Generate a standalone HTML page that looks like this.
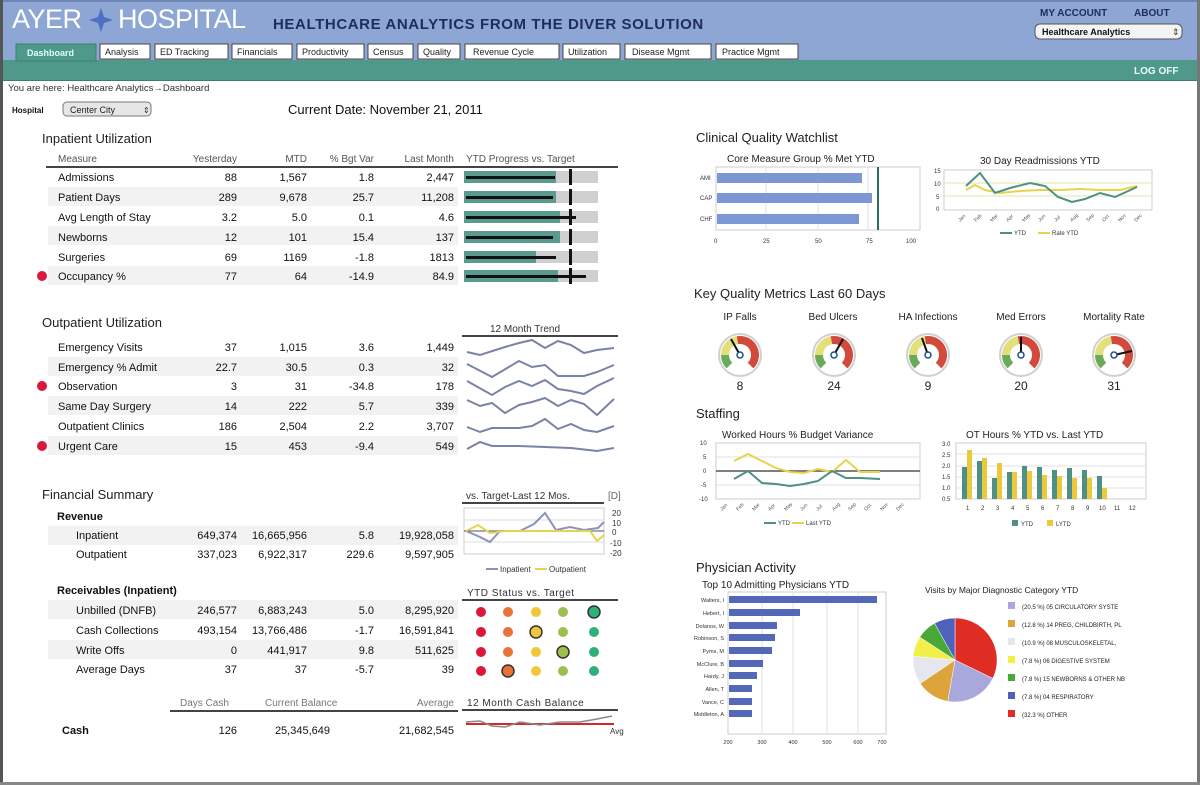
<!DOCTYPE html>
<html><head><meta charset="utf-8"><style>
html,body{margin:0;padding:0;background:#fff;}
svg{display:block;font-family:"Liberation Sans",sans-serif;}
</style></head><body>
<svg width="1200" height="785" viewBox="0 0 1200 785" xmlns="http://www.w3.org/2000/svg">
<rect x="0" y="0" width="1200" height="785" fill="#fff"/>
<rect x="0" y="0" width="1200" height="62" fill="#8ea6d3"/>
<rect x="0" y="0" width="1200" height="2" fill="#6f86b6"/>
<rect x="0" y="60" width="1200" height="21" fill="#4f998b"/>
<rect x="0" y="80" width="1200" height="1" fill="#3d7d70"/>
<rect x="0" y="0" width="3" height="785" fill="#555"/>
<rect x="1197" y="0" width="3" height="785" fill="#777"/>
<rect x="0" y="782" width="1200" height="3" fill="#888"/>
<text x="12" y="28" font-size="27" fill="#fff" letter-spacing="-0.5">AYER</text>
<path d="M101 8 L104 17 L113 20 L104 23 L101 32 L98 23 L89 20 L98 17Z" fill="#4d6fc4"/>
<text x="118" y="28" font-size="27" fill="#fff" letter-spacing="-0.5">HOSPITAL</text>
<text x="273" y="29" font-size="15" fill="#1e2c5e" font-weight="bold" letter-spacing="0.6">HEALTHCARE ANALYTICS FROM THE DIVER SOLUTION</text>
<text x="1040" y="16" font-size="10" fill="#1e2c5e" font-weight="bold">MY ACCOUNT</text>
<text x="1134" y="16" font-size="10" fill="#1e2c5e" font-weight="bold">ABOUT</text>
<rect x="1035" y="24" width="147" height="15" rx="5" fill="#f4f4f4" stroke="#555"/>
<text x="1042" y="35" font-size="9" font-weight="bold" fill="#111">Healthcare Analytics</text>
<text x="1172" y="35" font-size="9" fill="#333">⇕</text>
<text x="1134" y="74" font-size="10" fill="#e8fff8" font-weight="bold">LOG OFF</text>
<rect x="16" y="44" width="80" height="17" fill="#4f998b" stroke="#3d7d70"/>
<text x="27" y="56" font-size="9" font-weight="bold" fill="#dff">Dashboard</text>
<g font-size="9" fill="#222">
<rect x="100" y="44" width="50" height="15" fill="#fff" stroke="#444"/><text x="105" y="55">Analysis</text>
<rect x="155" y="44" width="73" height="15" fill="#fff" stroke="#444"/><text x="160" y="55">ED Tracking</text>
<rect x="232" y="44" width="60" height="15" fill="#fff" stroke="#444"/><text x="237" y="55">Financials</text>
<rect x="297" y="44" width="67" height="15" fill="#fff" stroke="#444"/><text x="302" y="55">Productivity</text>
<rect x="368" y="44" width="45" height="15" fill="#fff" stroke="#444"/><text x="373" y="55">Census</text>
<rect x="418" y="44" width="42" height="15" fill="#fff" stroke="#444"/><text x="423" y="55">Quality</text>
<rect x="465" y="44" width="94" height="15" fill="#fff" stroke="#444"/><text x="473" y="55">Revenue Cycle</text>
<rect x="563" y="44" width="57" height="15" fill="#fff" stroke="#444"/><text x="568" y="55">Utilization</text>
<rect x="625" y="44" width="86" height="15" fill="#fff" stroke="#444"/><text x="632" y="55">Disease Mgmt</text>
<rect x="716" y="44" width="82" height="15" fill="#fff" stroke="#444"/><text x="722" y="55">Practice Mgmt</text>
</g>
<text x="8" y="91" font-size="9.5" fill="#333">You are here: Healthcare Analytics→Dashboard</text>
<text x="12" y="113" font-size="8" font-weight="bold" fill="#111">Hospital</text>
<rect x="63" y="102" width="88" height="14" rx="4" fill="#e6e6e6" stroke="#777"/>
<text x="70" y="113" font-size="9" fill="#222">Center City</text>
<text x="143" y="113" font-size="8" fill="#333">⇕</text>
<text x="288" y="114" font-size="13" fill="#111">Current Date: November 21, 2011</text>

<text x="42" y="143" font-size="13" fill="#222">Inpatient Utilization</text>
<g font-size="10" fill="#555">
<text x="58" y="162">Measure</text>
<text x="237" y="162" text-anchor="end">Yesterday</text>
<text x="307" y="162" text-anchor="end">MTD</text>
<text x="374" y="162" text-anchor="end">% Bgt Var</text>
<text x="454" y="162" text-anchor="end">Last Month</text>
<text x="466" y="162">YTD Progress vs. Target</text>
</g>
<rect x="46" y="166" width="572" height="2" fill="#444"/>
<g fill="#f2f2f2"><rect x="48" y="187" width="410" height="19"/><rect x="48" y="226" width="410" height="19"/><rect x="48" y="266" width="410" height="19"/></g>
<g font-size="11" fill="#111">
<text x="58" y="181">Admissions</text><text x="237" y="181" text-anchor="end">88</text><text x="307" y="181" text-anchor="end">1,567</text><text x="374" y="181" text-anchor="end">1.8</text><text x="454" y="181" text-anchor="end">2,447</text>
<text x="58" y="201">Patient Days</text><text x="237" y="201" text-anchor="end">289</text><text x="307" y="201" text-anchor="end">9,678</text><text x="374" y="201" text-anchor="end">25.7</text><text x="454" y="201" text-anchor="end">11,208</text>
<text x="58" y="221">Avg Length of Stay</text><text x="237" y="221" text-anchor="end">3.2</text><text x="307" y="221" text-anchor="end">5.0</text><text x="374" y="221" text-anchor="end">0.1</text><text x="454" y="221" text-anchor="end">4.6</text>
<text x="58" y="241">Newborns</text><text x="237" y="241" text-anchor="end">12</text><text x="307" y="241" text-anchor="end">101</text><text x="374" y="241" text-anchor="end">15.4</text><text x="454" y="241" text-anchor="end">137</text>
<text x="58" y="261">Surgeries</text><text x="237" y="261" text-anchor="end">69</text><text x="307" y="261" text-anchor="end">1169</text><text x="374" y="261" text-anchor="end">-1.8</text><text x="454" y="261" text-anchor="end">1813</text>
<text x="58" y="280">Occupancy %</text><text x="237" y="280" text-anchor="end">77</text><text x="307" y="280" text-anchor="end">64</text><text x="374" y="280" text-anchor="end">-14.9</text><text x="454" y="280" text-anchor="end">84.9</text>
</g>
<circle cx="42" cy="276" r="5" fill="#d9183a"/>
<g>
<rect x="464" y="171" width="134" height="12" fill="#cfcfcf"/><rect x="464" y="171" width="92" height="12" fill="#5b9a8e"/><rect x="466" y="176" width="89" height="3" fill="#111"/><rect x="569" y="169" width="3" height="16" fill="#111"/>
<rect x="464" y="191" width="134" height="12" fill="#cfcfcf"/><rect x="464" y="191" width="92" height="12" fill="#5b9a8e"/><rect x="466" y="196" width="87" height="3" fill="#111"/><rect x="569" y="189" width="3" height="16" fill="#111"/>
<rect x="464" y="211" width="134" height="12" fill="#cfcfcf"/><rect x="464" y="211" width="96" height="12" fill="#5b9a8e"/><rect x="466" y="216" width="110" height="3" fill="#111"/><rect x="569" y="209" width="3" height="16" fill="#111"/>
<rect x="464" y="231" width="134" height="12" fill="#cfcfcf"/><rect x="464" y="231" width="96" height="12" fill="#5b9a8e"/><rect x="466" y="236" width="87" height="3" fill="#111"/><rect x="569" y="229" width="3" height="16" fill="#111"/>
<rect x="464" y="251" width="134" height="12" fill="#cfcfcf"/><rect x="464" y="251" width="72" height="12" fill="#5b9a8e"/><rect x="466" y="256" width="90" height="3" fill="#111"/><rect x="569" y="249" width="3" height="16" fill="#111"/>
<rect x="464" y="270" width="134" height="12" fill="#cfcfcf"/><rect x="464" y="270" width="94" height="12" fill="#5b9a8e"/><rect x="466" y="275" width="120" height="3" fill="#111"/><rect x="569" y="268" width="3" height="16" fill="#111"/>
</g>

<text x="42" y="327" font-size="13" fill="#222">Outpatient Utilization</text>
<text x="490" y="332" font-size="10" fill="#333">12 Month Trend</text>
<rect x="462" y="335" width="156" height="2" fill="#444"/>
<g fill="#f2f2f2"><rect x="48" y="357" width="410" height="19"/><rect x="48" y="396" width="410" height="19"/><rect x="48" y="436" width="410" height="19"/></g>
<g font-size="11" fill="#111">
<text x="58" y="351">Emergency Visits</text><text x="237" y="351" text-anchor="end">37</text><text x="307" y="351" text-anchor="end">1,015</text><text x="374" y="351" text-anchor="end">3.6</text><text x="454" y="351" text-anchor="end">1,449</text>
<text x="58" y="371">Emergency % Admit</text><text x="237" y="371" text-anchor="end">22.7</text><text x="307" y="371" text-anchor="end">30.5</text><text x="374" y="371" text-anchor="end">0.3</text><text x="454" y="371" text-anchor="end">32</text>
<text x="58" y="390">Observation</text><text x="237" y="390" text-anchor="end">3</text><text x="307" y="390" text-anchor="end">31</text><text x="374" y="390" text-anchor="end">-34.8</text><text x="454" y="390" text-anchor="end">178</text>
<text x="58" y="410">Same Day Surgery</text><text x="237" y="410" text-anchor="end">14</text><text x="307" y="410" text-anchor="end">222</text><text x="374" y="410" text-anchor="end">5.7</text><text x="454" y="410" text-anchor="end">339</text>
<text x="58" y="430">Outpatient Clinics</text><text x="237" y="430" text-anchor="end">186</text><text x="307" y="430" text-anchor="end">2,504</text><text x="374" y="430" text-anchor="end">2.2</text><text x="454" y="430" text-anchor="end">3,707</text>
<text x="58" y="450">Urgent Care</text><text x="237" y="450" text-anchor="end">15</text><text x="307" y="450" text-anchor="end">453</text><text x="374" y="450" text-anchor="end">-9.4</text><text x="454" y="450" text-anchor="end">549</text>
</g>
<circle cx="42" cy="386" r="5" fill="#d9183a"/><circle cx="42" cy="446" r="5" fill="#d9183a"/>
<g fill="none" stroke="#7a82a8" stroke-width="2">
<polyline points="467,352 480,355 505,347 519,343 532,340 545,348 558,341 571,345 584,353 597,350 614,348"/>
<polyline points="467,364 492,377 519,361 532,367 545,365 558,376 584,376 597,372 614,365"/>
<polyline points="467,381 492,395 505,387 519,381 532,386 545,380 558,389 571,391 584,394 597,386 614,378"/>
<polyline points="467,400 480,406 492,403 505,413 519,405 532,402 545,398 558,406 571,400 584,404 597,415 614,399"/>
<polyline points="467,427 480,432 492,428 519,428 532,426 545,419 558,429 571,424 584,430 597,432 614,426"/>
<polyline points="467,449 480,442 492,446 519,446 545,447 571,448 597,451 614,448"/>
</g>

<text x="42" y="499" font-size="13" fill="#222">Financial Summary</text>
<text x="57" y="520" font-size="11" font-weight="bold" fill="#111">Revenue</text>
<text x="57" y="594" font-size="11" font-weight="bold" fill="#111">Receivables (Inpatient)</text>
<g fill="#f2f2f2"><rect x="48" y="526" width="410" height="19"/><rect x="48" y="600" width="410" height="19"/><rect x="48" y="640" width="410" height="19"/></g>
<g font-size="11" fill="#111">
<text x="76" y="539">Inpatient</text><text x="237" y="539" text-anchor="end">649,374</text><text x="307" y="539" text-anchor="end">16,665,956</text><text x="374" y="539" text-anchor="end">5.8</text><text x="454" y="539" text-anchor="end">19,928,058</text>
<text x="76" y="558">Outpatient</text><text x="237" y="558" text-anchor="end">337,023</text><text x="307" y="558" text-anchor="end">6,922,317</text><text x="374" y="558" text-anchor="end">229.6</text><text x="454" y="558" text-anchor="end">9,597,905</text>
<text x="76" y="614">Unbilled (DNFB)</text><text x="237" y="614" text-anchor="end">246,577</text><text x="307" y="614" text-anchor="end">6,883,243</text><text x="374" y="614" text-anchor="end">5.0</text><text x="454" y="614" text-anchor="end">8,295,920</text>
<text x="76" y="634">Cash Collections</text><text x="237" y="634" text-anchor="end">493,154</text><text x="307" y="634" text-anchor="end">13,766,486</text><text x="374" y="634" text-anchor="end">-1.7</text><text x="454" y="634" text-anchor="end">16,591,841</text>
<text x="76" y="654">Write Offs</text><text x="237" y="654" text-anchor="end">0</text><text x="307" y="654" text-anchor="end">441,917</text><text x="374" y="654" text-anchor="end">9.8</text><text x="454" y="654" text-anchor="end">511,625</text>
<text x="76" y="673">Average Days</text><text x="237" y="673" text-anchor="end">37</text><text x="307" y="673" text-anchor="end">37</text><text x="374" y="673" text-anchor="end">-5.7</text><text x="454" y="673" text-anchor="end">39</text>
<text x="62" y="734" font-weight="bold">Cash</text><text x="237" y="734" text-anchor="end">126</text><text x="330" y="734" text-anchor="end">25,345,649</text><text x="454" y="734" text-anchor="end">21,682,545</text>
</g>
<g font-size="10" fill="#777">
<text x="180" y="706">Days Cash</text><text x="265" y="706">Current Balance</text><text x="454" y="706" text-anchor="end">Average</text>
</g>
<rect x="170" y="710" width="288" height="2" fill="#444"/>
<text x="466" y="499" font-size="10" fill="#333">vs.  Target-Last 12 Mos.</text>
<text x="608" y="499" font-size="10" fill="#666">[D]</text>
<rect x="462" y="502" width="142" height="2" fill="#444"/>
<rect x="464" y="508" width="140" height="46" fill="#fff" stroke="#ccc"/>
<g stroke="#ddd"><line x1="464" y1="520" x2="604" y2="520"/><line x1="464" y1="542" x2="604" y2="542"/></g>
<line x1="464" y1="531" x2="604" y2="531" stroke="#555"/>
<polyline fill="none" stroke="#8a92c0" stroke-width="2" points="466,531 480,537 490,542 500,531 520,531 534,524 545,513 556,530 570,527 584,530 598,528 604,522"/>
<polyline fill="none" stroke="#e8d44c" stroke-width="2" points="466,531 478,525 490,533 505,531 530,531 560,531 590,531 597,541 604,535"/>
<g font-size="8" fill="#333"><text x="612" y="516">20</text><text x="612" y="526">10</text><text x="612" y="535">0</text><text x="610" y="546">-10</text><text x="610" y="556">-20</text></g>
<g font-size="8" fill="#333"><line x1="486" y1="569" x2="498" y2="569" stroke="#8a92c0" stroke-width="2"/><text x="500" y="572">Inpatient</text><line x1="535" y1="569" x2="547" y2="569" stroke="#e8d44c" stroke-width="2"/><text x="549" y="572">Outpatient</text></g>
<text x="467" y="596" font-size="10" fill="#333" letter-spacing="0.5">YTD Status vs. Target</text>
<rect x="462" y="599" width="156" height="2" fill="#444"/>
<g>
<g fill="#d9183a"><circle cx="481" cy="612" r="5"/><circle cx="481" cy="632" r="5"/><circle cx="481" cy="652" r="5"/><circle cx="481" cy="671" r="5"/></g>
<g fill="#e8733a"><circle cx="508" cy="612" r="5"/><circle cx="508" cy="632" r="5"/><circle cx="508" cy="652" r="5"/><circle cx="508" cy="671" r="6" stroke="#333" stroke-width="1.5"/></g>
<g fill="#f0c63a"><circle cx="536" cy="612" r="5"/><circle cx="536" cy="632" r="6" stroke="#333" stroke-width="1.5"/><circle cx="536" cy="652" r="5"/><circle cx="536" cy="671" r="5"/></g>
<g fill="#9cbf4e"><circle cx="563" cy="612" r="5"/><circle cx="563" cy="632" r="5"/><circle cx="563" cy="652" r="6" stroke="#333" stroke-width="1.5"/><circle cx="563" cy="671" r="5"/></g>
<g fill="#2fb07a"><circle cx="594" cy="612" r="6" stroke="#333" stroke-width="1.5"/><circle cx="594" cy="632" r="5"/><circle cx="594" cy="652" r="5"/><circle cx="594" cy="671" r="5"/></g>
</g>
<text x="467" y="706" font-size="10" fill="#333" letter-spacing="0.5">12 Month Cash Balance</text>
<rect x="462" y="709" width="156" height="2" fill="#444"/>
<line x1="466" y1="724" x2="614" y2="724" stroke="#d62828" stroke-width="2"/>
<polyline fill="none" stroke="#888" stroke-width="1.5" points="466,722 480,721 492,726 505,727 520,722 540,725 560,722 580,722 597,719 612,716"/>
<text x="610" y="734" font-size="8" fill="#333">Avg</text>

<text x="696" y="142" font-size="13" fill="#222">Clinical Quality Watchlist</text>
<text x="727" y="162" font-size="10" fill="#222">Core Measure Group % Met YTD</text>
<rect x="716" y="167" width="204" height="63" fill="#fff" stroke="#ccc"/>
<g stroke="#e2e2e2"><line x1="766" y1="167" x2="766" y2="230"/><line x1="818" y1="167" x2="818" y2="230"/><line x1="868" y1="167" x2="868" y2="230"/></g>
<g fill="#7d97d4"><rect x="717" y="173" width="145" height="10"/><rect x="717" y="193" width="155" height="10"/><rect x="717" y="214" width="142" height="10"/></g>
<rect x="877" y="167" width="2" height="63" fill="#2d6e60"/>
<g font-size="6" fill="#333"><text x="700" y="180">AMI</text><text x="700" y="200">CAP</text><text x="700" y="221">CHF</text>
<text x="714" y="243">0</text><text x="763" y="243">25</text><text x="815" y="243">50</text><text x="866" y="243">75</text><text x="906" y="243">100</text></g>
<text x="980" y="164" font-size="10" fill="#222">30 Day Readmissions YTD</text>
<rect x="944" y="170" width="208" height="40" fill="#fff" stroke="#ccc"/>
<g stroke="#e4e4a0"><line x1="944" y1="183" x2="1152" y2="183"/><line x1="944" y1="196" x2="1152" y2="196"/></g>
<polyline fill="none" stroke="#e8d44c" stroke-width="2" points="966,190 975,185 985,190 1000,193 1020,191 1040,190 1060,190 1080,189 1100,190 1120,190 1137,186"/>
<polyline fill="none" stroke="#4e8f86" stroke-width="2" points="966,186 980,173 995,193 1010,188 1030,183 1045,186 1058,197 1072,202 1085,199 1100,193 1115,197 1137,187"/>
<g font-size="6" fill="#333"><text x="934" y="173">15</text><text x="934" y="186">10</text><text x="936" y="199">5</text><text x="936" y="211">0</text></g>
<g font-size="5" fill="#555">
<text transform="translate(960,222) rotate(-45)">Jan</text><text transform="translate(976,222) rotate(-45)">Feb</text><text transform="translate(992,222) rotate(-45)">Mar</text><text transform="translate(1008,222) rotate(-45)">Apr</text><text transform="translate(1024,222) rotate(-45)">May</text><text transform="translate(1040,222) rotate(-45)">Jun</text><text transform="translate(1056,222) rotate(-45)">Jul</text><text transform="translate(1072,222) rotate(-45)">Aug</text><text transform="translate(1088,222) rotate(-45)">Sep</text><text transform="translate(1104,222) rotate(-45)">Oct</text><text transform="translate(1120,222) rotate(-45)">Nov</text><text transform="translate(1136,222) rotate(-45)">Dec</text>
</g>
<g font-size="6" fill="#333"><line x1="1000" y1="233" x2="1012" y2="233" stroke="#4e8f86" stroke-width="2"/><text x="1014" y="235">YTD</text><line x1="1038" y1="233" x2="1050" y2="233" stroke="#e8d44c" stroke-width="2"/><text x="1052" y="235">Rate YTD</text></g>

<text x="694" y="298" font-size="13" fill="#222">Key Quality Metrics Last 60 Days</text>
<g font-size="10" fill="#222" text-anchor="middle">
<text x="740" y="320">IP Falls</text><text x="833" y="320">Bed Ulcers</text><text x="928" y="320">HA Infections</text><text x="1021" y="320">Med Errors</text><text x="1114" y="320">Mortality Rate</text>
<text x="740" y="390" font-size="12">8</text><text x="834" y="390" font-size="12">24</text><text x="928" y="390" font-size="12">9</text><text x="1021" y="390" font-size="12">20</text><text x="1114" y="390" font-size="12">31</text>
</g>
<g>
<g transform="translate(740,355)">
<circle r="21" fill="#fff" stroke="#d0d0d0" stroke-width="2"/>
<g fill="none" stroke-width="8"><path d="M-10.6 10.6 A15 15 0 0 1 -15 0" stroke="#6aaa5a"/><path d="M-15 0 A15 15 0 0 1 -2.6 -14.8" stroke="#e3e07a"/><path d="M-2.6 -14.8 A15 15 0 0 1 10.6 10.6" stroke="#d24a3c"/></g>
<line x1="0" y1="0" x2="-9" y2="-16" stroke="#111" stroke-width="2"/><circle r="3" fill="#fff" stroke="#1d4f8a" stroke-width="1.5"/>
</g>
<g transform="translate(834,355)">
<circle r="21" fill="#fff" stroke="#d0d0d0" stroke-width="2"/>
<g fill="none" stroke-width="8"><path d="M-10.6 10.6 A15 15 0 0 1 -15 0" stroke="#6aaa5a"/><path d="M-15 0 A15 15 0 0 1 -2.6 -14.8" stroke="#e3e07a"/><path d="M-2.6 -14.8 A15 15 0 0 1 10.6 10.6" stroke="#d24a3c"/></g>
<line x1="0" y1="0" x2="9" y2="-16" stroke="#111" stroke-width="2"/><circle r="3" fill="#fff" stroke="#1d4f8a" stroke-width="1.5"/>
</g>
<g transform="translate(928,355)">
<circle r="21" fill="#fff" stroke="#d0d0d0" stroke-width="2"/>
<g fill="none" stroke-width="8"><path d="M-10.6 10.6 A15 15 0 0 1 -15 0" stroke="#6aaa5a"/><path d="M-15 0 A15 15 0 0 1 -2.6 -14.8" stroke="#e3e07a"/><path d="M-2.6 -14.8 A15 15 0 0 1 10.6 10.6" stroke="#d24a3c"/></g>
<line x1="0" y1="0" x2="-6" y2="-17" stroke="#111" stroke-width="2"/><circle r="3" fill="#fff" stroke="#1d4f8a" stroke-width="1.5"/>
</g>
<g transform="translate(1021,355)">
<circle r="21" fill="#fff" stroke="#d0d0d0" stroke-width="2"/>
<g fill="none" stroke-width="8"><path d="M-10.6 10.6 A15 15 0 0 1 -15 0" stroke="#6aaa5a"/><path d="M-15 0 A15 15 0 0 1 -2.6 -14.8" stroke="#e3e07a"/><path d="M-2.6 -14.8 A15 15 0 0 1 10.6 10.6" stroke="#d24a3c"/></g>
<line x1="0" y1="0" x2="0" y2="-18" stroke="#111" stroke-width="2"/><circle r="3" fill="#fff" stroke="#1d4f8a" stroke-width="1.5"/>
</g>
<g transform="translate(1114,355)">
<circle r="21" fill="#fff" stroke="#d0d0d0" stroke-width="2"/>
<g fill="none" stroke-width="8"><path d="M-10.6 10.6 A15 15 0 0 1 -15 0" stroke="#6aaa5a"/><path d="M-15 0 A15 15 0 0 1 -2.6 -14.8" stroke="#e3e07a"/><path d="M-2.6 -14.8 A15 15 0 0 1 10.6 10.6" stroke="#d24a3c"/></g>
<line x1="0" y1="0" x2="18" y2="-4" stroke="#111" stroke-width="2"/><circle r="3" fill="#fff" stroke="#1d4f8a" stroke-width="1.5"/>
</g>
</g>

<text x="696" y="418" font-size="13" fill="#222">Staffing</text>
<text x="722" y="438" font-size="10" fill="#222">Worked Hours % Budget Variance</text>
<rect x="716" y="443" width="204" height="56" fill="#fff" stroke="#ccc"/>
<g stroke="#e2e2e2"><line x1="716" y1="457" x2="920" y2="457"/><line x1="716" y1="485" x2="920" y2="485"/></g>
<line x1="716" y1="471" x2="920" y2="471" stroke="#555" stroke-width="1.5"/>
<polyline fill="none" stroke="#e8d44c" stroke-width="2" points="734,461 748,454 762,461 776,468 790,472 804,473 818,469 832,472 846,460 860,472 880,472"/>
<polyline fill="none" stroke="#4e8f86" stroke-width="2" points="734,479 748,471 762,483 776,484 790,486 804,484 818,481 832,471 846,478 860,478 880,479"/>
<g font-size="6" fill="#333"><text x="700" y="445">10</text><text x="703" y="459">5</text><text x="703" y="473">0</text><text x="701" y="487">-5</text><text x="699" y="501">-10</text></g>
<g font-size="5" fill="#555">
<text transform="translate(722,511) rotate(-45)">Jan</text><text transform="translate(738,511) rotate(-45)">Feb</text><text transform="translate(754,511) rotate(-45)">Mar</text><text transform="translate(770,511) rotate(-45)">Apr</text><text transform="translate(786,511) rotate(-45)">May</text><text transform="translate(802,511) rotate(-45)">Jun</text><text transform="translate(818,511) rotate(-45)">Jul</text><text transform="translate(834,511) rotate(-45)">Aug</text><text transform="translate(850,511) rotate(-45)">Sep</text><text transform="translate(866,511) rotate(-45)">Oct</text><text transform="translate(882,511) rotate(-45)">Nov</text><text transform="translate(898,511) rotate(-45)">Dec</text>
</g>
<g font-size="6" fill="#333"><line x1="764" y1="523" x2="776" y2="523" stroke="#4e8f86" stroke-width="2"/><text x="778" y="525">YTD</text><line x1="792" y1="523" x2="804" y2="523" stroke="#e8d44c" stroke-width="2"/><text x="806" y="525">Last YTD</text></g>

<text x="966" y="438" font-size="10" fill="#222">OT Hours % YTD vs. Last YTD</text>
<rect x="956" y="443" width="190" height="56" fill="#fff" stroke="#ccc"/>
<g stroke="#e2e2e2"><line x1="956" y1="454" x2="1146" y2="454"/><line x1="956" y1="466" x2="1146" y2="466"/><line x1="956" y1="477" x2="1146" y2="477"/><line x1="956" y1="488" x2="1146" y2="488"/></g>
<g fill="#4e8f86">
<rect x="962" y="467" width="5" height="32"/><rect x="977" y="461" width="5" height="38"/><rect x="992" y="478" width="5" height="21"/><rect x="1007" y="472" width="5" height="27"/><rect x="1022" y="466" width="5" height="33"/><rect x="1037" y="467" width="5" height="32"/><rect x="1052" y="470" width="5" height="29"/><rect x="1067" y="468" width="5" height="31"/><rect x="1082" y="470" width="5" height="29"/><rect x="1097" y="476" width="5" height="23"/>
</g>
<g fill="#ecc93a">
<rect x="967" y="450" width="5" height="49"/><rect x="982" y="458" width="5" height="41"/><rect x="997" y="463" width="5" height="36"/><rect x="1012" y="472" width="5" height="27"/><rect x="1027" y="471" width="5" height="28"/><rect x="1042" y="475" width="5" height="24"/><rect x="1057" y="476" width="5" height="23"/><rect x="1072" y="478" width="5" height="21"/><rect x="1087" y="478" width="5" height="21"/><rect x="1102" y="488" width="5" height="11"/>
</g>
<g font-size="6" fill="#333"><text x="942" y="446">3.0</text><text x="942" y="457">2.5</text><text x="942" y="468">2.0</text><text x="942" y="479">1.5</text><text x="942" y="490">1.0</text><text x="942" y="501">0.5</text>
<text x="966" y="510">1</text><text x="981" y="510">2</text><text x="996" y="510">3</text><text x="1011" y="510">4</text><text x="1026" y="510">5</text><text x="1041" y="510">6</text><text x="1056" y="510">7</text><text x="1071" y="510">8</text><text x="1086" y="510">9</text><text x="1099" y="510">10</text><text x="1114" y="510">11</text><text x="1129" y="510">12</text>
<rect x="1012" y="520" width="6" height="6" fill="#4e8f86"/><text x="1021" y="526">YTD</text><rect x="1047" y="520" width="6" height="6" fill="#ecc93a"/><text x="1056" y="526">LYTD</text></g>

<text x="696" y="572" font-size="13" fill="#222">Physician Activity</text>
<text x="702" y="588" font-size="10" fill="#222">Top 10 Admitting Physicians YTD</text>
<rect x="728" y="592" width="158" height="142" fill="#fff" stroke="#ccc"/>
<g stroke="#e2e2e2"><line x1="762" y1="592" x2="762" y2="734"/><line x1="793" y1="592" x2="793" y2="734"/><line x1="827" y1="592" x2="827" y2="734"/><line x1="858" y1="592" x2="858" y2="734"/></g>
<g fill="#5468b8">
<rect x="729" y="596" width="148" height="7"/><rect x="729" y="609" width="71" height="7"/><rect x="729" y="622" width="48" height="7"/><rect x="729" y="634" width="46" height="7"/><rect x="729" y="647" width="43" height="7"/><rect x="729" y="660" width="34" height="7"/><rect x="729" y="672" width="28" height="7"/><rect x="729" y="685" width="23" height="7"/><rect x="729" y="698" width="23" height="7"/><rect x="729" y="710" width="23" height="7"/>
</g>
<g font-size="5.5" fill="#333" text-anchor="end">
<text x="724" y="602">Walters, I</text><text x="724" y="615">Hebert, I</text><text x="724" y="628">Dolanos, W</text><text x="724" y="640">Robinson, S</text><text x="724" y="653">Pyms, M</text><text x="724" y="666">McClure, B</text><text x="724" y="678">Hardy, J</text><text x="724" y="691">Allen, T</text><text x="724" y="704">Vance, C</text><text x="724" y="716">Middleton, A</text>
</g>
<g font-size="5.5" fill="#333" text-anchor="middle"><text x="728" y="744">200</text><text x="762" y="744">300</text><text x="793" y="744">400</text><text x="827" y="744">500</text><text x="858" y="744">600</text><text x="882" y="744">700</text></g>

<text x="925" y="593" font-size="8.5" fill="#222">Visits by Major Diagnostic Category YTD</text>
<g stroke="#fff" stroke-width="0.5">
<path d="M955 660 L955 618 A42 42 0 0 1 992.8 678.4Z" fill="#e02d24"/>
<path d="M955 660 L992.8 678.4 A42 42 0 0 1 947.7 701.4Z" fill="#a8a8dc"/>
<path d="M955 660 L947.7 701.4 A42 42 0 0 1 920.2 683.5Z" fill="#dca43a"/>
<path d="M955 660 L920.2 683.5 A42 42 0 0 1 913.2 656.3Z" fill="#e6e6ee"/>
<path d="M955 660 L913.2 656.3 A42 42 0 0 1 919.8 637.1Z" fill="#f0f048"/>
<path d="M955 660 L919.8 637.1 A42 42 0 0 1 934.6 623.3Z" fill="#48a838"/>
<path d="M955 660 L934.6 623.3 A42 42 0 0 1 955 618Z" fill="#4e62bc"/>
</g>
<g font-size="6" fill="#222">
<rect x="1008" y="602" width="7" height="7" fill="#a8a8dc"/><text x="1022" y="609">(20.5 %) 05 CIRCULATORY SYSTE</text>
<rect x="1008" y="620" width="7" height="7" fill="#dca43a"/><text x="1022" y="627">(12.8 %) 14 PREG, CHILDBIRTH, PL</text>
<rect x="1008" y="638" width="7" height="7" fill="#e6e6ee"/><text x="1022" y="645">(10.9 %) 08 MUSCULOSKELETAL,</text>
<rect x="1008" y="656" width="7" height="7" fill="#f0f048"/><text x="1022" y="663">(7.8 %) 06 DIGESTIVE SYSTEM</text>
<rect x="1008" y="674" width="7" height="7" fill="#48a838"/><text x="1022" y="681">(7.8 %) 15 NEWBORNS &amp; OTHER NB</text>
<rect x="1008" y="692" width="7" height="7" fill="#4e62bc"/><text x="1022" y="699">(7.8 %) 04 RESPIRATORY</text>
<rect x="1008" y="710" width="7" height="7" fill="#e02d24"/><text x="1022" y="717">(32.3 %) OTHER</text>
</g>
</svg>
</body></html>
